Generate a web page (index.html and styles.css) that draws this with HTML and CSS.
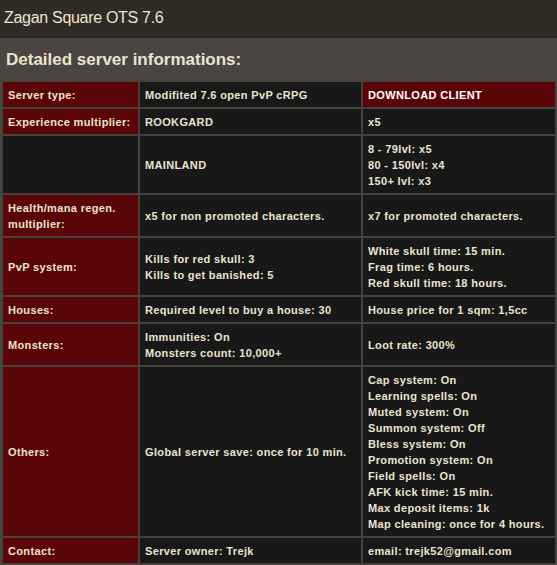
FILE: index.html
```html
<!DOCTYPE html>
<html lang="en">
  <head>
    <meta charset="UTF-8" />
    <title>Zagan Square OTS 7.6</title>
    <link rel="stylesheet" href="styles.css">
  </head>
  <body>
    <div class="title-bar">Zagan Square OTS 7.6</div>
    <div class="content">
      <h2>Detailed server informations:</h2>
      <table class="info">
        <colgroup>
          <col class="c1" />
          <col class="c2" />
          <col class="c3" />
        </colgroup>
        <tr>
          <td class="label">Server type:</td>
          <td>Modifited 7.6 open PvP cRPG</td>
          <td class="label download">DOWNLOAD CLIENT</td>
        </tr>
        <tr>
          <td class="label">Experience multiplier:</td>
          <td>ROOKGARD</td>
          <td>x5</td>
        </tr>
        <tr>
          <td></td>
          <td>MAINLAND</td>
          <td>8 - 79lvl: x5<br />80 - 150lvl: x4<br />150+ lvl: x3</td>
        </tr>
        <tr>
          <td class="label">Health/mana regen. multiplier:</td>
          <td>x5 for non promoted characters.</td>
          <td>x7 for promoted characters.</td>
        </tr>
        <tr>
          <td class="label">PvP system:</td>
          <td>Kills for red skull: 3<br />Kills to get banished: 5</td>
          <td>White skull time: 15 min.<br />Frag time: 6 hours.<br />Red skull time: 18 hours.</td>
        </tr>
        <tr>
          <td class="label">Houses:</td>
          <td>Required level to buy a house: 30</td>
          <td>House price for 1 sqm: 1,5cc</td>
        </tr>
        <tr>
          <td class="label">Monsters:</td>
          <td>Immunities: On<br />Monsters count: 10,000+</td>
          <td>Loot rate: 300%</td>
        </tr>
        <tr>
          <td class="label">Others:</td>
          <td>Global server save: once for 10 min.</td>
          <td>
            Cap system: On<br />
            Learning spells: On<br />
            Muted system: On<br />
            Summon system: Off<br />
            Bless system: On<br />
            Promotion system: On<br />
            Field spells: On<br />
            AFK kick time: 15 min.<br />
            Max deposit items: 1k<br />
            Map cleaning: once for 4 hours.
          </td>
        </tr>
        <tr>
          <td class="label">Contact:</td>
          <td>Server owner: Trejk</td>
          <td>email: trejk52@gmail.com</td>
        </tr>
      </table>
    </div>
  </body>
</html>
```

FILE: styles.css
```css
body {
  margin: 0;
  background: #45413c;
  font-family: Tahoma, "Liberation Sans", Arial, sans-serif;
  color: #ebe3cf;
}
.title-bar {
  height: 38px;
  line-height: 36px;
  padding-left: 4px;
  font-size: 16px;
  letter-spacing: -0.3px;
  background: #302b25;
  border-bottom: 1px solid #29251f;
  box-sizing: border-box;
}
.content {
  background: #4a4540;
  padding: 0 0 0 1px;
}
h2 {
  margin: 0;
  height: 44px;
  line-height: 44px;
  padding-left: 5px;
  font-size: 17px;
  font-weight: bold;
}
.info {
  border-collapse: separate;
  border-spacing: 2px;
  background: #45413d;
  width: 556px;
  table-layout: fixed;
  margin: -2px 0 0 0;
}
.c1 {
  width: 135px;
}
.c2 {
  width: 221px;
}
td {
  background: #181818;
  font-size: 11px;
  font-weight: bold;
  letter-spacing: 0.35px;
  line-height: 16px;
  padding: 5px 4px 4px 5px;
  vertical-align: middle;
}
td.label {
  background: #5a0508;
}
td.download {
  color: #ffffff;
}
```
